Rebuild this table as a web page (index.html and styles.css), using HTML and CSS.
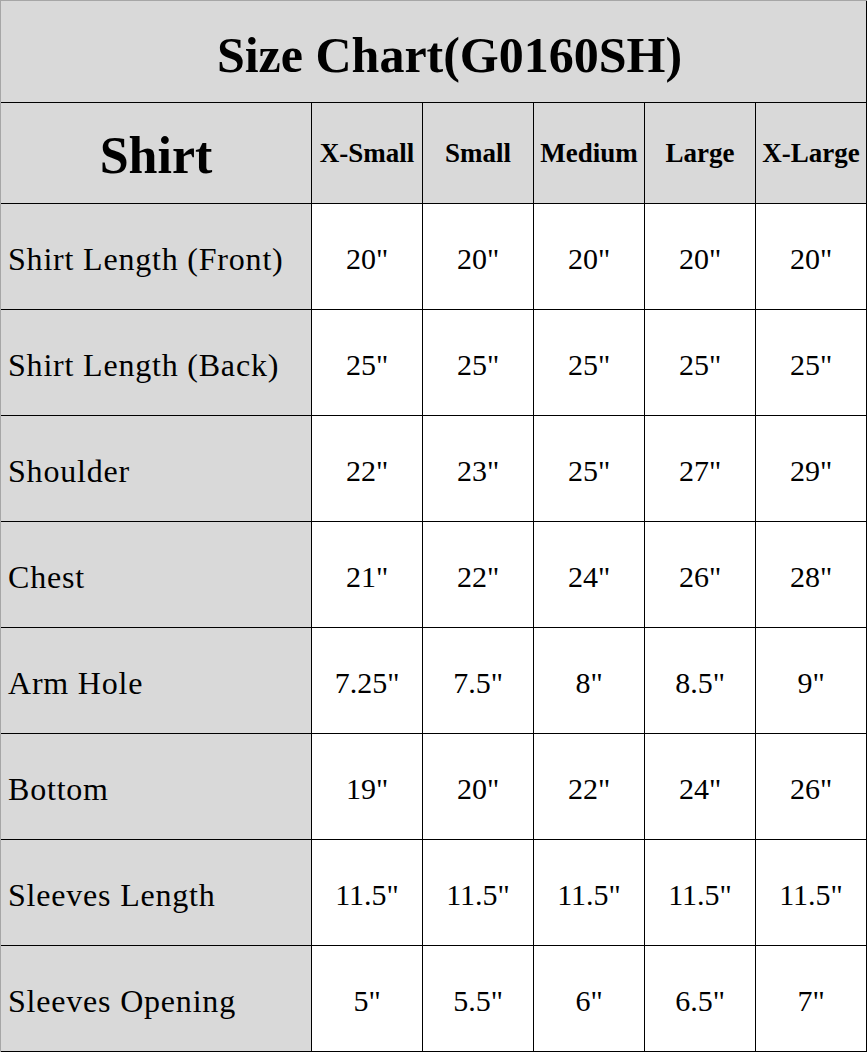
FILE: index.html
```html
<!DOCTYPE html>
<html>
<head>
<meta charset="utf-8">
<link rel="stylesheet" href="styles.css">
</head>
<body>
<div class="chart">
  <div class="cell title">Size Chart(G0160SH)</div>
  <div class="cell head main">Shirt</div>
  <div class="cell head">X-Small</div>
  <div class="cell head">Small</div>
  <div class="cell head">Medium</div>
  <div class="cell head">Large</div>
  <div class="cell head">X-Large</div>

  <div class="cell label">Shirt Length (Front)</div>
  <div class="cell val">20"</div><div class="cell val">20"</div><div class="cell val">20"</div><div class="cell val">20"</div><div class="cell val">20"</div>

  <div class="cell label">Shirt Length (Back)</div>
  <div class="cell val">25"</div><div class="cell val">25"</div><div class="cell val">25"</div><div class="cell val">25"</div><div class="cell val">25"</div>

  <div class="cell label">Shoulder</div>
  <div class="cell val">22"</div><div class="cell val">23"</div><div class="cell val">25"</div><div class="cell val">27"</div><div class="cell val">29"</div>

  <div class="cell label">Chest</div>
  <div class="cell val">21"</div><div class="cell val">22"</div><div class="cell val">24"</div><div class="cell val">26"</div><div class="cell val">28"</div>

  <div class="cell label">Arm Hole</div>
  <div class="cell val">7.25"</div><div class="cell val">7.5"</div><div class="cell val">8"</div><div class="cell val">8.5"</div><div class="cell val">9"</div>

  <div class="cell label">Bottom</div>
  <div class="cell val">19"</div><div class="cell val">20"</div><div class="cell val">22"</div><div class="cell val">24"</div><div class="cell val">26"</div>

  <div class="cell label">Sleeves Length</div>
  <div class="cell val">11.5"</div><div class="cell val">11.5"</div><div class="cell val">11.5"</div><div class="cell val">11.5"</div><div class="cell val">11.5"</div>

  <div class="cell label">Sleeves Opening</div>
  <div class="cell val">5"</div><div class="cell val">5.5"</div><div class="cell val">6"</div><div class="cell val">6.5"</div><div class="cell val">7"</div>
</div>
</body>
</html>
```

FILE: styles.css
```css
html, body {
  margin: 0;
  padding: 0;
  background: #ffffff;
}

.chart {
  width: 867px;
  box-sizing: border-box;
  display: grid;
  grid-template-columns: 311px repeat(5, 111px);
  grid-template-rows: 102px 101px repeat(8, 106px);
  border-top: 1px solid #a6a6a6;
  border-left: 1px solid #a6a6a6;
  font-family: "Liberation Serif", "Times New Roman", serif;
  color: #000;
}

.cell {
  box-sizing: border-box;
  border-right: 1px solid #000;
  border-bottom: 1px solid #000;
  display: flex;
  align-items: center;
  justify-content: center;
  font-size: 30px;
  white-space: nowrap;
  overflow: hidden;
}

.title {
  grid-column: 1 / -1;
  background: #d9d9d9;
  font-weight: bold;
  font-size: 50px;
  padding-top: 6px;
  padding-left: 32px;
}

.head {
  background: #d9d9d9;
  font-weight: bold;
  font-size: 27px;
}

.head.main {
  font-size: 52px;
  padding-top: 4px;
}

.label {
  background: #d9d9d9;
  justify-content: flex-start;
  padding-left: 7px;
  padding-top: 5px;
  font-size: 32px;
  letter-spacing: 0.8px;
}

.val {
  background: #fff;
  padding-top: 5px;
}
```
